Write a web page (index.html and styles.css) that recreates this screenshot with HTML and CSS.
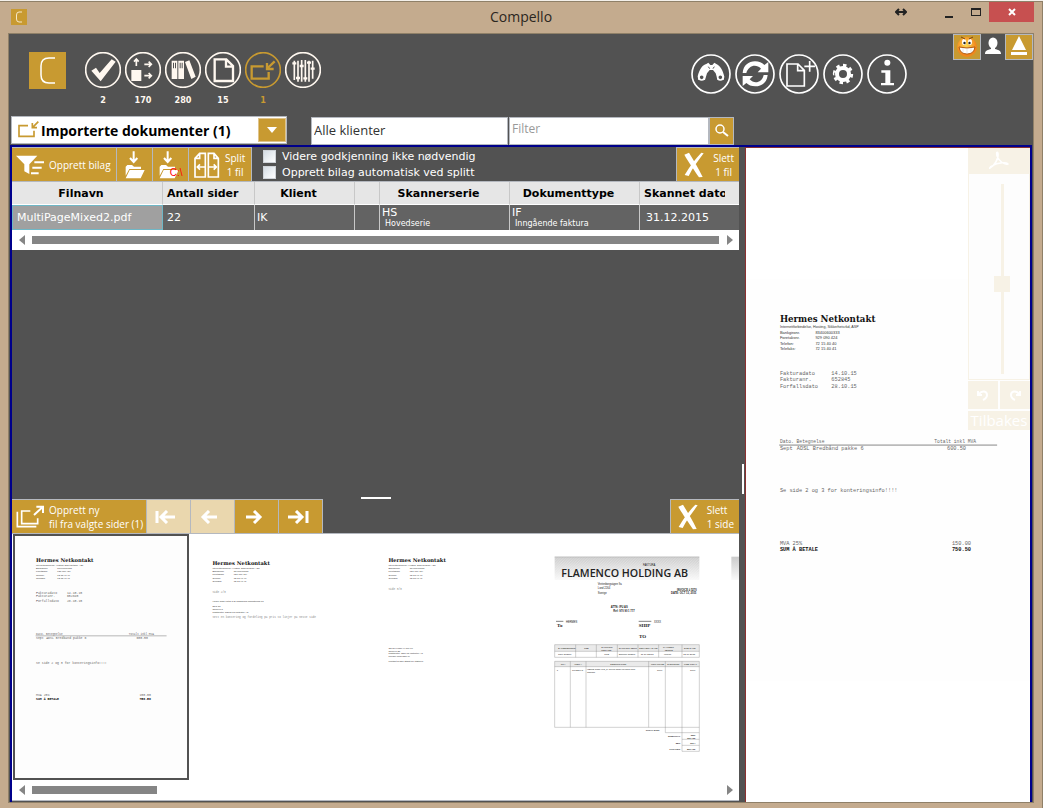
FILE: index.html
```html
<!DOCTYPE html>
<html lang="no">
<head>
<meta charset="utf-8">
<title>Compello</title>
<link rel="stylesheet" href="styles.css">
</head>
<body>
<svg class="defs" aria-hidden="true">
  <symbol id="cross" viewBox="0 0 60 76"><path d="M1 7 L15 1 C26 20 42 44 56 74 L45 75 C33 56 12 28 1 7Z M52 1 L59 3 C44 24 26 46 14 71 L2 68 C17 42 35 18 52 1Z" fill="#fff"/></symbol>
  <symbol id="letterhead" viewBox="0 0 855 1212" overflow="visible">
    <text class="doc-title" x="102" y="130">Hermes Netkontakt</text>
    <g class="doc-narrow">
      <text class="doc-strong" x="102" y="149">Internettforbindelse, Hosting, Sikkerhetsrkd, ASP</text>
      <text x="102" y="166">Bankgironr.</text><text x="209" y="166">83400600333</text>
      <text x="102" y="180">Foretaksnr.</text><text x="209" y="180">929 090 424</text>
      <text x="102" y="198">Telefon:</text><text x="209" y="198">72 15 40 40</text>
      <text x="102" y="215">Telefaks:</text><text x="209" y="215">72 15 40 41</text>
    </g>
  </symbol>
  <symbol id="page-one" viewBox="0 0 855 1212">
    <use href="#letterhead" width="855" height="1212"/>
    <g class="doc-mono">
      <text x="102" y="290">Fakturadato</text><text x="257" y="290">14.10.15</text>
      <text x="102" y="308">Fakturanr.</text><text x="257" y="308">652845</text>
      <text x="102" y="329">Forfallsdato</text><text x="257" y="329">28.10.15</text>
      <text class="doc-small" x="102" y="495">Dato. Betegnelse</text><text class="doc-small" x="567" y="495">Totalt inkl MVA</text>
      <path d="M100 500H756" stroke="#888" stroke-width="3"/>
      <text x="102" y="515">Sept</text><text x="153" y="515">ADSL Bredbånd pakke 6</text><text x="605" y="515">600.50</text>
      <text x="102" y="640">Se side 2 og 3 for konteringsinfo!!!!</text>
      <text x="102" y="801">MVA 25%</text><text x="620" y="801">150.00</text>
      <text class="doc-sum" x="102" y="819">SUM Å BETALE</text><text class="doc-sum" x="620" y="819">750.50</text>
    </g>
  </symbol>
  <pattern id="grain" width="8" height="8" patternUnits="userSpaceOnUse"><path d="M0 8L8 0" stroke="#fff" stroke-width="1.500" opacity=".5"/></pattern>
  <linearGradient id="banner" x1="0" y1="0" x2="0" y2="1"><stop offset="0" stop-color="#cbcbcb"/><stop offset="1" stop-color="#f9f9f9"/></linearGradient>
</svg>

<div class="window">
  <header class="titlebar">
    <svg class="title-icon" viewBox="0 0 16 16"><rect width="16" height="16" fill="#c89a31"/><path d="M11 3H8Q5.500 3 5.500 6V10Q5.500 13 8 13H11" fill="none" stroke="#f6e8c8"/></svg>
    <h1 class="title">Compello</h1>
    <div class="window-buttons">
      <button class="wbtn wbtn-move" aria-label="Flytt"><svg width="12" height="8" viewBox="0 0 12 8"><path d="M1 4H11M4 1L1 4L4 7M8 1L11 4L8 7" fill="none" stroke="#222" stroke-width="2"/></svg></button>
      <button class="wbtn wbtn-min" aria-label="Minimer"><svg width="8" height="8" viewBox="0 0 8 8"><rect y="6" width="8" height="2" fill="#222"/></svg></button>
      <button class="wbtn wbtn-max" aria-label="Maksimer"><svg width="10" height="8" viewBox="0 0 10 8"><path d="M0 0H10V8H0ZM1 2V7H9V2Z" fill="#222" fill-rule="evenodd"/></svg></button>
      <button class="wbtn wbtn-close" aria-label="Lukk"><svg width="8" height="8" viewBox="0 0 8 8"><path d="M1 1L7 7M7 1L1 7" stroke="#fff" stroke-width="2"/></svg></button>
    </div>
  </header>

  <main class="client">
    <div class="header">
      <svg class="logo" viewBox="0 0 37 37"><rect width="37" height="37" fill="#c89a31"/><path d="M26 6H20Q12 6 12 14V23Q12 31 20 31H26" fill="none" stroke="#fff" stroke-width="1.500"/></svg>
      <nav class="modules">
        <button class="module"><svg viewBox="254 156 108 108"><circle cx="308" cy="210" r="52"/><path class="solid" d="M273 212L287 203L298 219L334 178L346 185L301 244Z"/></svg><span>2</span></button>
        <button class="module"><svg viewBox="374 156 108 108"><circle cx="428" cy="210" r="52"/><path class="solid" d="M393 210H423V243H393Z"/><path class="line" d="M408 198V177M401 185L408 177L415 185M432 193H453M445 185L453 193L445 201M432 227H453M445 219L453 227L445 235"/></svg><span>170</span></button>
        <button class="module"><svg viewBox="494 156 108 108"><circle cx="548" cy="210" r="52"/><path class="solid" fill-rule="evenodd" d="M514 182H531V237H514ZM518 188V205H521V188ZM524 188V205H527V188ZM534 182H551V237H534ZM538 188V205H541V188ZM544 188V205H547V188ZM554 186L567 181L586 230L573 237Z"/></svg><span>280</span></button>
        <button class="module"><svg viewBox="614 156 108 108"><circle cx="668" cy="210" r="52"/><path class="thick" d="M643 178H678L698 198V243H643ZM677 178V200H698"/></svg><span>15</span></button>
        <button class="module active"><svg viewBox="734 156 108 108"><circle cx="788" cy="210" r="52"/><path class="thick" d="M790 199H754V236H805V216M823 184L802 204M800 189V207H820"/></svg><span>1</span></button>
        <button class="module" aria-label="Innstillinger"><svg viewBox="854 156 108 108"><circle cx="908" cy="210" r="52"/><path class="line" d="M882 182V240M893 182V245M904 180V245M915 180V245M926 182V245M937 182V236"/><path class="thick" d="M876 190H888M887 234H899M898 198H910M909 235H921M920 188H932M931 206H943"/></svg><span></span></button>
      </nav>
      <div class="tools">
        <button class="tool" aria-label="Søk"><svg viewBox="32 162 120 120"><circle cx="92" cy="222" r="57"/><path class="solid" d="M52 229C57 208 67 194 78 192L84 188L90 195H96L102 188L108 192C119 196 128 212 132 230L130 240L112 240L106 220L98 210H88L80 220L74 240H54Z"/><circle class="hole" cx="64" cy="232" r="8"/><circle class="hole" cx="120" cy="232" r="8"/><path d="M84 200L88 206M102 200L98 206" stroke="#525252" stroke-width="3"/></svg></button>
        <button class="tool" aria-label="Oppdater"><svg viewBox="164 162 120 120"><circle cx="224" cy="222" r="57"/><path class="solid" d="M187 219C189 196 205 184 224 184C237 184 246 189 252 195L264 186V217H232L242 206C227 190 204 197 198 219ZM262 225C260 248 244 259 225 259C213 259 204 255 198 249L187 258V228H218L208 238C222 254 245 248 250 225Z"/></svg></button>
        <button class="tool" aria-label="Nytt dokument"><svg viewBox="296 162 120 120"><circle cx="356" cy="222" r="57"/><path class="line" d="M320 192H353L372 211V258H320ZM352 192V212H372M388 183V215M372 199H404"/></svg></button>
        <button class="tool" aria-label="Oppsett"><svg viewBox="428 162 120 120"><circle cx="488" cy="222" r="57"/><circle class="gear-ring" cx="488" cy="222" r="18"/><circle class="gear-teeth" cx="488" cy="222" r="26" pathLength="80"/></svg></button>
        <button class="tool" aria-label="Info"><svg viewBox="560 162 120 120"><circle cx="620" cy="222" r="57"/><circle class="solid" cx="621" cy="188" r="9"/><path class="solid" d="M603 211H630V249H641V256H602V249H615V218H603Z"/></svg></button>
      </div>
      <div class="user">
        <button class="user-btn gold" aria-label="Tilbakemelding"><svg width="22" height="22" viewBox="0 0 22 22"><defs><radialGradient id="face" cx=".45" cy=".4"><stop offset="0" stop-color="#ffdc55"/><stop offset="1" stop-color="#f0861c"/></radialGradient></defs><circle cx="11" cy="11" r="10" fill="url(#face)"/><ellipse cx="8" cy="6" rx="2" ry="3" fill="#fff"/><ellipse cx="14" cy="6" rx="2" ry="3" fill="#fff"/><circle cx="8.500" cy="7" r="1.200" fill="#222"/><circle cx="13.500" cy="7" r="1.200" fill="#222"/><path d="M5 1L9 3M13 3L17 1" stroke="#7a4310"/><path d="M3 11Q11 13 19 11Q18 18 11 18Q4 18 3 11Z" fill="#fff" stroke="#b25a12"/><path d="M7 12V17M11 12V18M15 12V17" stroke="#ccc" stroke-width=".5"/></svg></button>
        <button class="user-btn plain" aria-label="Bruker"><svg width="18" height="18" viewBox="0 0 18 18"><ellipse cx="9" cy="6" rx="4.500" ry="5.500" fill="#fff"/><path d="M1 17C1 13 4 13 7 12V10H11V12C14 13 17 13 17 17Z" fill="#fff"/></svg></button>
        <button class="user-btn gold" aria-label="Skjul"><svg width="16" height="20" viewBox="0 0 16 20"><path d="M8 0L15 14H1ZM0 16H16V19H0Z" fill="#fff"/></svg></button>
      </div>
    </div>

    <div class="filters">
      <label class="module-select">
        <svg width="22" height="18" viewBox="54 366 66 54"><path d="M84 380H57V412H102V395M115 368L98 385M97 372V386H111" fill="none" stroke="#c89a31" stroke-width="5"/></svg>
        <select aria-label="Modul"><option>Importerte dokumenter (1)</option></select>
        <svg width="28" height="24" viewBox="0 0 28 24"><rect x=".5" y=".5" width="27" height="23" fill="#c89a31" stroke="#e0c48a"/><path d="M9 9H19L14 15Z" fill="#fff"/></svg>
      </label>
      <div class="query">
        <select class="client-select" aria-label="Klient"><option>Alle klienter</option></select>
        <input class="filter-input" type="text" placeholder="Filter" aria-label="Filter">
        <button class="search" aria-label="Søk"><svg width="14" height="14" viewBox="0 0 14 14"><circle cx="5" cy="5" r="4" fill="none" stroke="#fff" stroke-width="1.500"/><path d="M8 8L13 12" stroke="#fff" stroke-width="2"/></svg></button>
      </div>
    </div>

    <div class="workspace">
      <section class="left">
        <div class="toolbar">
          <button class="gold-btn create"><svg width="28" height="22" viewBox="48 124 84 66"><path d="M48 129H112L88 155V184L73 176V155Z" fill="#fff"/><path d="M103 149H132M97 165H125M93 182H116" stroke="#fff" stroke-width="6"/></svg><span>Opprett bilag</span></button>
          <button class="gold-btn square" aria-label="Importer fil"><svg width="20" height="28" viewBox="374 116 60 84"><path d="M400 117V146M389 137L400 149L411 137" fill="none" stroke="#fff" stroke-width="6"/><path d="M376 163L381 158H395L401 163H422V170H387L376 190ZM388 173H433L421 198H376Z" fill="#fff"/></svg></button>
          <button class="gold-btn square drive" aria-label="Importer fra C:\"><svg width="28" height="28" viewBox="474 116 84 84"><path d="M500 117V146M489 137L500 149L511 137" fill="none" stroke="#fff" stroke-width="6"/><path d="M476 163L481 158H495L501 163H522V170H487L476 190ZM488 173H533L521 198H476Z" fill="#fff"/><text class="drive-label" x="506" y="192">C:\</text></svg></button>
          <button class="gold-btn split"><svg width="26" height="26" viewBox="582 116 78 78"><path d="M599 120H616V191H585V135ZM599 120V135H585M625 120H642L655 135V191H625ZM642 120V135H655" fill="none" stroke="#fff" stroke-width="5"/><path d="M592 161H616M600 153L592 161L600 169M625 161H649M641 153L649 161L641 169" fill="none" stroke="#fff" stroke-width="5"/></svg><span>Split<br>1 fil</span></button>
          <div class="checks">
            <label><input type="checkbox">Videre godkjenning ikke nødvendig</label>
            <label><input type="checkbox">Opprett bilag automatisk ved splitt</label>
          </div>
          <button class="gold-btn delete"><svg width="20" height="26"><use href="#cross"/></svg><span>Slett<br>1 fil</span></button>
        </div>
        <table class="files">
          <colgroup><col class="c-name"><col class="c-pages"><col class="c-client"><col class="c-gap"><col class="c-series"><col class="c-type"><col></colgroup>
          <thead><tr><th>Filnavn</th><th class="start">Antall sider</th><th>Klient</th><th></th><th class="series">Skannerserie</th><th>Dokumenttype</th><th class="start"><div class="clip">Skannet dato</div></th></tr></thead>
          <tbody><tr><td class="selected">MultiPageMixed2.pdf</td><td>22</td><td class="tight">IK</td><td></td><td class="tight">HS<small>Hovedserie</small></td><td class="tight">IF<small>Inngående faktura</small></td><td class="date">31.12.2015</td></tr></tbody>
        </table>
        <div class="scrollbar"><i class="arrow prev"></i><i class="bar full"></i><i class="arrow next"></i></div>
        <div class="empty"><i class="grip-h"></i></div>
        <div class="toolbar">
          <button class="gold-btn new-file"><svg width="28" height="24" viewBox="47 38 84 72"><path d="M90 56H64V94H112V78M51 58V103H108" fill="none" stroke="#fff" stroke-width="5"/><path d="M101 68L127 44M108 43H128V62" fill="none" stroke="#fff" stroke-width="6"/></svg><span>Opprett ny<br>fil fra valgte sider (1)</span></button>
          <button class="gold-btn step" disabled aria-label="Første"><svg width="22" height="14" viewBox="0 0 22 14"><path d="M2 1V13M20 7H6M12 1L6 7L12 13" fill="none" stroke="#fff" stroke-width="3"/></svg></button>
          <button class="gold-btn step" disabled aria-label="Forrige"><svg width="22" height="14" viewBox="0 0 22 14"><path d="M18 7H4M10 1L4 7L10 13" fill="none" stroke="#fff" stroke-width="3"/></svg></button>
          <button class="gold-btn step" aria-label="Neste"><svg width="22" height="14" viewBox="0 0 22 14"><path d="M3 7H17M11 1L17 7L11 13" fill="none" stroke="#fff" stroke-width="3"/></svg></button>
          <button class="gold-btn step" aria-label="Siste"><svg width="22" height="14" viewBox="0 0 22 14"><path d="M20 1V13M1 7H15M9 1L15 7L9 13" fill="none" stroke="#fff" stroke-width="3"/></svg></button>
          <button class="gold-btn delete wide"><svg width="20" height="26"><use href="#cross"/></svg><span>Slett<br>1 side</span></button>
        </div>
        <div class="pages">
          <div class="thumbs">
            <svg class="thumb chosen" viewBox="0 0 855 1212"><use href="#page-one"/></svg>
            <svg class="thumb" viewBox="0 0 855 1212">
              <use href="#letterhead" x="2" y="16" width="855" height="1212"/>
              <g class="doc-mono"><text class="doc-small" x="104" y="287">Side 2/3</text><text class="doc-small" x="104" y="411">Sett en kontering og fordeling på pris to linjer på neste side</text></g>
              <g class="doc-narrow"><text x="104" y="331">HUSK husk viktig å se bankfirma oppdatering nå</text><text x="104" y="356">NFS as</text><text x="104" y="370">Skolevn 5</text><text x="104" y="384">Postkontor, Røros og Inntekter AS</text></g>
            </svg>
            <svg class="thumb" viewBox="0 0 855 1212">
              <use href="#letterhead" x="2" width="855" height="1212"/>
              <g class="doc-mono"><text class="doc-small" x="104" y="268">Side 3/3</text></g>
              <g class="doc-narrow"><text x="104" y="565">Og her ender vi 100 00</text><text x="104" y="579">Skolevn 25</text><text x="104" y="593">Postkontor, Oslo og Inntekter AS</text><text x="104" y="607">Penger innbygger kr</text><text x="104" y="633">Kontant bygge størst for utstillere</text></g>
            </svg>
            <svg class="thumb" viewBox="15 138 516 726">
              <rect x="50" y="200" width="434" height="70" fill="url(#banner)"/><rect x="50" y="200" width="434" height="70" fill="url(#grain)"/><path d="M50 201H484" stroke="#999"/>
              <text class="inv-title" x="70" y="262">FLAMENCO HOLDING AB</text>
              <g class="inv-sans">
                <text x="315" y="229">FAKTURA</text>
                <text x="179" y="285">Vretenborgvägen 9a</text><text x="179" y="298">Lund 2264</text><text x="179" y="311">Sverige</text>
                <g class="inv-bold"><text x="417" y="302">INVOICE # 5270</text><text x="399" y="312">DATE: OCT 13, 2015</text><text x="218" y="355">ATTN: IFU AS</text><text x="226" y="365">Ref: 970 90 1 777</text></g>
                <text x="84" y="398">HERMES</text><text x="348" y="398">XXXX</text>
              </g>
              <g class="inv-serif"><text x="57" y="411">To</text><text x="302" y="411">SHIP</text><text x="303" y="444">TO</text></g>
              <path d="M54 394H76M302 394H340" stroke="#444" stroke-width="2"/>
              <path d="M50 464H484V484H50ZM50 514H484V530H50Z" fill="#eaeaea"/>
              <path d="M50 464H484V502H50ZM50 484H484M113 464V502M175 464V502M238 464V502M300 464V502M362 464V502M432 464V502M50 514H484V712H50ZM50 530H484M97 514V712M144 514V712M332 514V712M382 514V728M432 514V784M382 728H484V784H432M484 712V728M432 748H484M432 766H484" fill="none" stroke="#777"/>
              <g class="inv-sans inv-tiny">
                <text x="60" y="478">SALESPERSON</text><text x="138" y="478">JOB</text><text x="190" y="473">SHIPPING</text><text x="190" y="482">METHOD</text><text x="242" y="478">SHIPPING TERM</text><text x="304" y="478">DELIVERY DATE</text><text x="375" y="473">PAYMENT</text><text x="380" y="482">TERMS</text><text x="438" y="478">DUE DATE</text>
                <text x="60" y="496">Jarle Nilsson</text><text x="199" y="496">UPS</text><text x="242" y="496">Scanner Nilsbor</text><text x="308" y="496">11.10.12015</text><text x="378" y="496">Invoice</text><text x="436" y="496">13.10.2015</text>
                <text x="68" y="525">QTY</text><text x="109" y="525">ITEM #</text><text x="217" y="525">DESCRIPTION</text><text x="339" y="525">UNIT PRICE</text><text x="388" y="525">DISCOUNT</text><text x="438" y="525">LINE TOTAL</text>
                <text x="56" y="544">1</text><text x="102" y="544">1002304-5</text><text x="147" y="540">ITEMS made 1x5_5, mixed länge needed form</text><text x="147" y="549">Tamaco</text><text x="357" y="544">1600</text><text x="456" y="544">1600</text>
                <g class="inv-bold"><text x="323" y="723">TOTAL DISC</text><text x="390" y="741">SUBTOTAL</text><text x="413" y="761">25%</text><text x="394" y="779">TOTALER</text><text x="458" y="737">SEK</text><text x="447" y="746">1614.00</text><text x="456" y="761">1014</text><text x="447" y="779">2014.00</text></g>
              </g>
            </svg>
            <svg class="thumb" viewBox="15 138 516 726"><rect x="52" y="200" width="434" height="70" fill="url(#banner)"/></svg>
          </div>
          <div class="scrollbar"><i class="arrow prev"></i><i class="bar"></i><i class="arrow next"></i></div>
        </div>
      </section>
      <div class="splitter"><i class="grip-v"></i></div>
      <section class="preview">
        <svg class="sheet" viewBox="0 0 855 1212"><use href="#page-one"/></svg>
        <div class="viewer-tools">
          <button class="vt pdf" aria-label="PDF"><svg width="22" height="20" viewBox="0 0 22 20"><path d="M2 17C6 15 11 8 10 2C9 0 8 2 9 5C11 10 16 14 20 13C20 11 10 11 4 15C2 16 1 18 2 17Z" fill="none" stroke="#fff" stroke-width="1.500"/></svg></button>
          <div class="zoom"><input type="range" min="0" max="100" value="47" aria-label="Zoom"></div>
          <div class="rotate">
            <button class="vt" aria-label="Roter venstre"><svg width="12" height="12" viewBox="0 0 12 12"><path d="M1 2V6H5M2 5C5 1 10 2 10 6Q10 9 6 11" fill="none" stroke="#fff" stroke-width="2"/></svg></button>
            <button class="vt" aria-label="Roter høyre"><svg width="12" height="12" viewBox="0 0 12 12"><path d="M11 2V6H7M10 5C7 1 2 2 2 6Q2 9 6 11" fill="none" stroke="#fff" stroke-width="2"/></svg></button>
          </div>
          <button class="vt reset">Tilbakes</button>
        </div>
      </section>
    </div>
  </main>
</div>
</body>
</html>
```
FILE: styles.css
```css
* { box-sizing: border-box; }

body {
  margin: 0;
  background: #c4ab8e;
  font-family: "DejaVu Sans", Verdana, sans-serif;
  font-size: 11px;
}

button, select, input {
  margin: 0;
  padding: 0;
  border: 0;
  border-radius: 0;
  background: none;
  color: inherit;
  font: inherit;
}

select { appearance: none; }

svg { display: block; flex: none; }

.defs { position: absolute; width: 0; height: 0; }

.window {
  display: flex;
  flex-direction: column;
  min-height: 100vh;
  padding: 0 9px 5px 8px;
  border-top: 1px solid #f4f0ea;
  box-shadow: inset 0 1px 0 #8f8068, inset -1px 0 0 #8f8068;
}

/* Title bar */
.titlebar {
  display: grid;
  grid-template-columns: 1fr auto 1fr;
  align-items: start;
  height: 32px;
}

.title-icon { width: 16px; height: 16px; margin: 8px 0 0 3px; }

.title {
  margin: 5px 0 0;
  color: #2b2620;
  font: 400 14px/22px "Open Sans", "Noto Sans", sans-serif;
}

.window-buttons { display: flex; justify-content: flex-end; padding-top: 1px; }

.wbtn { display: flex; align-items: center; justify-content: center; width: 27px; height: 20px; }
.wbtn-move { margin-right: 21px; }
.wbtn-min { padding-top: 4px; }
.wbtn-close { width: 45px; background: #c75050; }

/* Client area */
.client {
  display: flex;
  flex: 1;
  flex-direction: column;
  border: 1px solid #8f8068;
  background: #525252;
}

.header { display: flex; align-items: flex-start; height: 82px; }

.logo { width: 37px; height: 37px; margin: 18px 0 0 20px; }

.modules { display: flex; gap: 4px; margin: 18px 0 0 19px; }

.module {
  width: 36px;
  color: #fff8f0;
  font: 700 9px/12px "DejaVu Sans Condensed", "DejaVu Sans", sans-serif;
  text-align: center;
}
.module svg { width: 36px; height: 36px; margin-bottom: 6px; }
.module span { display: block; height: 12px; }
.module.active { color: #c89a31; }

.modules circle, .tools circle, .line, .thick { fill: none; stroke: currentColor; stroke-width: 5; }
.thick { stroke-width: 7; }
.header .solid { fill: currentColor; stroke: none; }
.header .hole { fill: #525252; }
.tools .gear-ring { stroke-width: 12; }
.tools .gear-teeth { stroke-width: 9; stroke-dasharray: 5 5; }

.tools { display: flex; gap: 4px; margin: 20px 46px 0 auto; color: #fff; }
.tool svg { width: 40px; height: 40px; }

.user { display: flex; }
.user-btn { display: flex; justify-content: center; height: 26px; }
.gold { width: 28px; padding-top: 1px; border: 1px solid #b4b8bf; background: #c89a31; }
.plain { width: 24px; padding-top: 3px; }

/* Filter row */
.filters { display: flex; align-items: flex-start; gap: 24px; height: 29px; padding-left: 2px; }

.module-select {
  display: flex;
  align-items: center;
  width: 276px;
  height: 28px;
  padding: 0 0 0 6px;
  border: 1px solid #b4b8bf;
  background: #fff;
}
.module-select select {
  flex: 1;
  min-width: 0;
  height: 26px;
  padding: 2px 0 0 1px;
  color: #000;
  font: 700 14px/24px "Open Sans", "Noto Sans", sans-serif;
}

.query { display: flex; padding-top: 1px; }

.client-select, .filter-input {
  height: 28px;
  padding: 0 2px 2px;
  border: 1px solid #b4b8bf;
  background: #fff;
  color: #333;
  font: 400 13px/18px "Open Sans", "Noto Sans", sans-serif;
}
.client-select { width: 197px; }
.filter-input { width: 200px; margin-left: 1px; padding-bottom: 6px; font-size: 12px; }
.filter-input::placeholder { color: #999; }

.search {
  display: flex;
  align-items: center;
  justify-content: center;
  width: 25px;
  height: 28px;
  border: 1px solid #b4b8bf;
  background: #c89a31;
}

/* Workspace */
.workspace {
  display: grid;
  flex: 1;
  grid-template-columns: minmax(0, 1fr) 6px 285px;
  margin: 0 1px;
  border: 2px solid #00008b;
  border-bottom: 0;
}

.left { display: flex; flex-direction: column; min-width: 0; padding-bottom: 1px; }

.toolbar { display: flex; height: 35px; border-bottom: 1px solid #b4b8bf; }

.gold-btn {
  display: flex;
  align-items: center;
  height: 34px;
  border: 1px solid #b4b8bf;
  border-width: 1px 1px 0 0;
  background: #c89a31;
  color: #fff;
  font: 400 10px/14px "Open Sans", "Noto Sans", sans-serif;
  white-space: nowrap;
}
.gold-btn:disabled { background: #ead7ae; }
.create { width: 105px; padding-left: 4px; gap: 5px; }
.square { justify-content: center; width: 36px; }
.drive { padding-left: 4px; }
.drive-label { fill: #f00; font: 400 30px "Liberation Sans", sans-serif; }
.split { width: 63px; padding-left: 5px; gap: 5px; text-align: center; }
.new-file { width: 135px; padding-left: 4px; gap: 5px; text-align: left; }
.step { justify-content: center; width: 44px; padding-right: 6px; }
.delete {
  justify-content: space-between;
  width: 63px;
  margin-left: auto;
  padding: 0 5px 0 7px;
  border-width: 1px 0 0 1px;
  text-align: center;
}
.wide { width: 69px; text-align: left; }

.checks { display: grid; align-content: start; padding: 1px 0 0 11px; color: #fff; }
.checks label { display: flex; align-items: center; gap: 6px; height: 16px; }
.checks input {
  appearance: none;
  width: 13px;
  height: 13px;
  border: 1px solid #cfd3d8;
  background: linear-gradient(135deg, #d4dce4, #fff);
}

.files { width: 100%; border-collapse: separate; border-spacing: 0; table-layout: fixed; }
.c-name { width: 151px; }
.c-pages { width: 92px; }
.c-client { width: 100px; }
.c-gap { width: 25px; }
.c-series, .c-type { width: 130px; }

.files th {
  height: 23px;
  padding: 1px 12px 0 0;
  border-right: 1px solid #c8c8c8;
  border-bottom: 1px solid #fff;
  background: #e6e6e6;
  color: #000;
  font-weight: 700;
  line-height: 14px;
}
.files th.start { padding: 1px 0 0 4px; text-align: left; }
.files .clip { margin-right: 14px; overflow: hidden; white-space: nowrap; }
.files td {
  height: 25px;
  padding: 0 4px;
  border-right: 1px solid #c8c8c8;
  background: #636363;
  color: #fff;
  line-height: 12px;
  white-space: nowrap;
}
.files th:last-child, .files td:last-child { border-right: 0; }
.files td.selected { border: 1px solid #6fb7c6; background: #a0a0a0; }
.files td.tight { padding: 0 2px; }
.files td.date { padding-left: 6px; }
.files small { display: block; padding-left: 3px; font-size: 8px; line-height: 10px; }

.scrollbar { display: flex; align-items: center; height: 20px; padding: 0 6px 0 7px; background: #fff; }
.arrow { border: 5px solid transparent; }
.prev { border-left: 0; border-right: 6px solid #858585; }
.next { border-right: 0; border-left: 6px solid #858585; margin-left: auto; }
.bar { width: 125px; height: 8px; margin: 0 8px 0 7px; background: #858585; }
.full { flex: 1; }

.empty { display: flex; flex: 1; align-items: flex-end; justify-content: center; }
.grip-h { width: 30px; height: 2px; background: #fff; }

.pages { border-bottom: 1px solid #b4b8bf; background: #fff; overflow: hidden; }
.thumbs { display: flex; padding-left: 1px; }
.thumb { width: 176px; height: 246px; border: 2px solid transparent; }
.chosen { border-color: #525252; background: #fdfdfd; }

.splitter { display: flex; align-items: center; justify-content: flex-end; padding: 8px 1px 0 0; }
.grip-v { width: 2px; height: 30px; background: #fff; }

/* Document preview */
.preview {
  position: relative;
  display: flex;
  align-items: center;
  padding-top: 10px;
  border: 1px solid #8b3030;
  border-right: 0;
  border-bottom: 0;
  background: #fff;
}
.sheet { width: 100%; background: #fefefe; }

.viewer-tools { position: absolute; top: 0; right: 0; width: 62px; }
.vt { display: flex; align-items: center; justify-content: center; background: #f7f2e6; color: #fff; }
.pdf { width: 100%; height: 25px; }
.zoom {
  display: flex;
  justify-content: center;
  height: 207px;
  padding: 10px 0 0 6px;
  border: 1px solid #f7f2e6;
  background: #fdfdfd;
}
.zoom input {
  width: 16px;
  height: 190px;
  appearance: none;
  background: linear-gradient(#f7f2e6, #f7f2e6) center / 3px 100% no-repeat;
  direction: rtl;
  writing-mode: vertical-lr;
}
.zoom input::-webkit-slider-thumb { appearance: none; width: 16px; height: 16px; background: #f7f2e6; }
.rotate { display: grid; grid-template-columns: 1fr 1fr; gap: 2px; padding: 1px 0 2px; }
.rotate .vt { height: 28px; }
.reset {
  width: 100%;
  height: 19px;
  overflow: hidden;
  font: 400 15px/19px "Open Sans", "Noto Sans", sans-serif;
}

/* Scanned documents */
.doc-title { font: 700 26px "DejaVu Serif", serif; fill: #111; }
.doc-narrow { font: 400 12px "Liberation Sans Narrow", "Liberation Sans", sans-serif; fill: #333; }
.doc-strong { font-size: 11px; }
.doc-mono { font: 400 16px "Liberation Mono", monospace; fill: #666; }
.doc-small { font-size: 14px; }
.doc-sum { font-weight: 700; fill: #111; }
.thumb .doc-mono { fill: #888; }
.inv-title { font: 600 32px "Open Sans", sans-serif; fill: #222; }
.inv-sans { font: 400 8px "Liberation Sans", sans-serif; fill: #222; }
.inv-tiny { font-size: 7px; }
.inv-bold { font-weight: 700; }
.inv-serif { font: 700 15px "Liberation Serif", serif; fill: #222; }
```
